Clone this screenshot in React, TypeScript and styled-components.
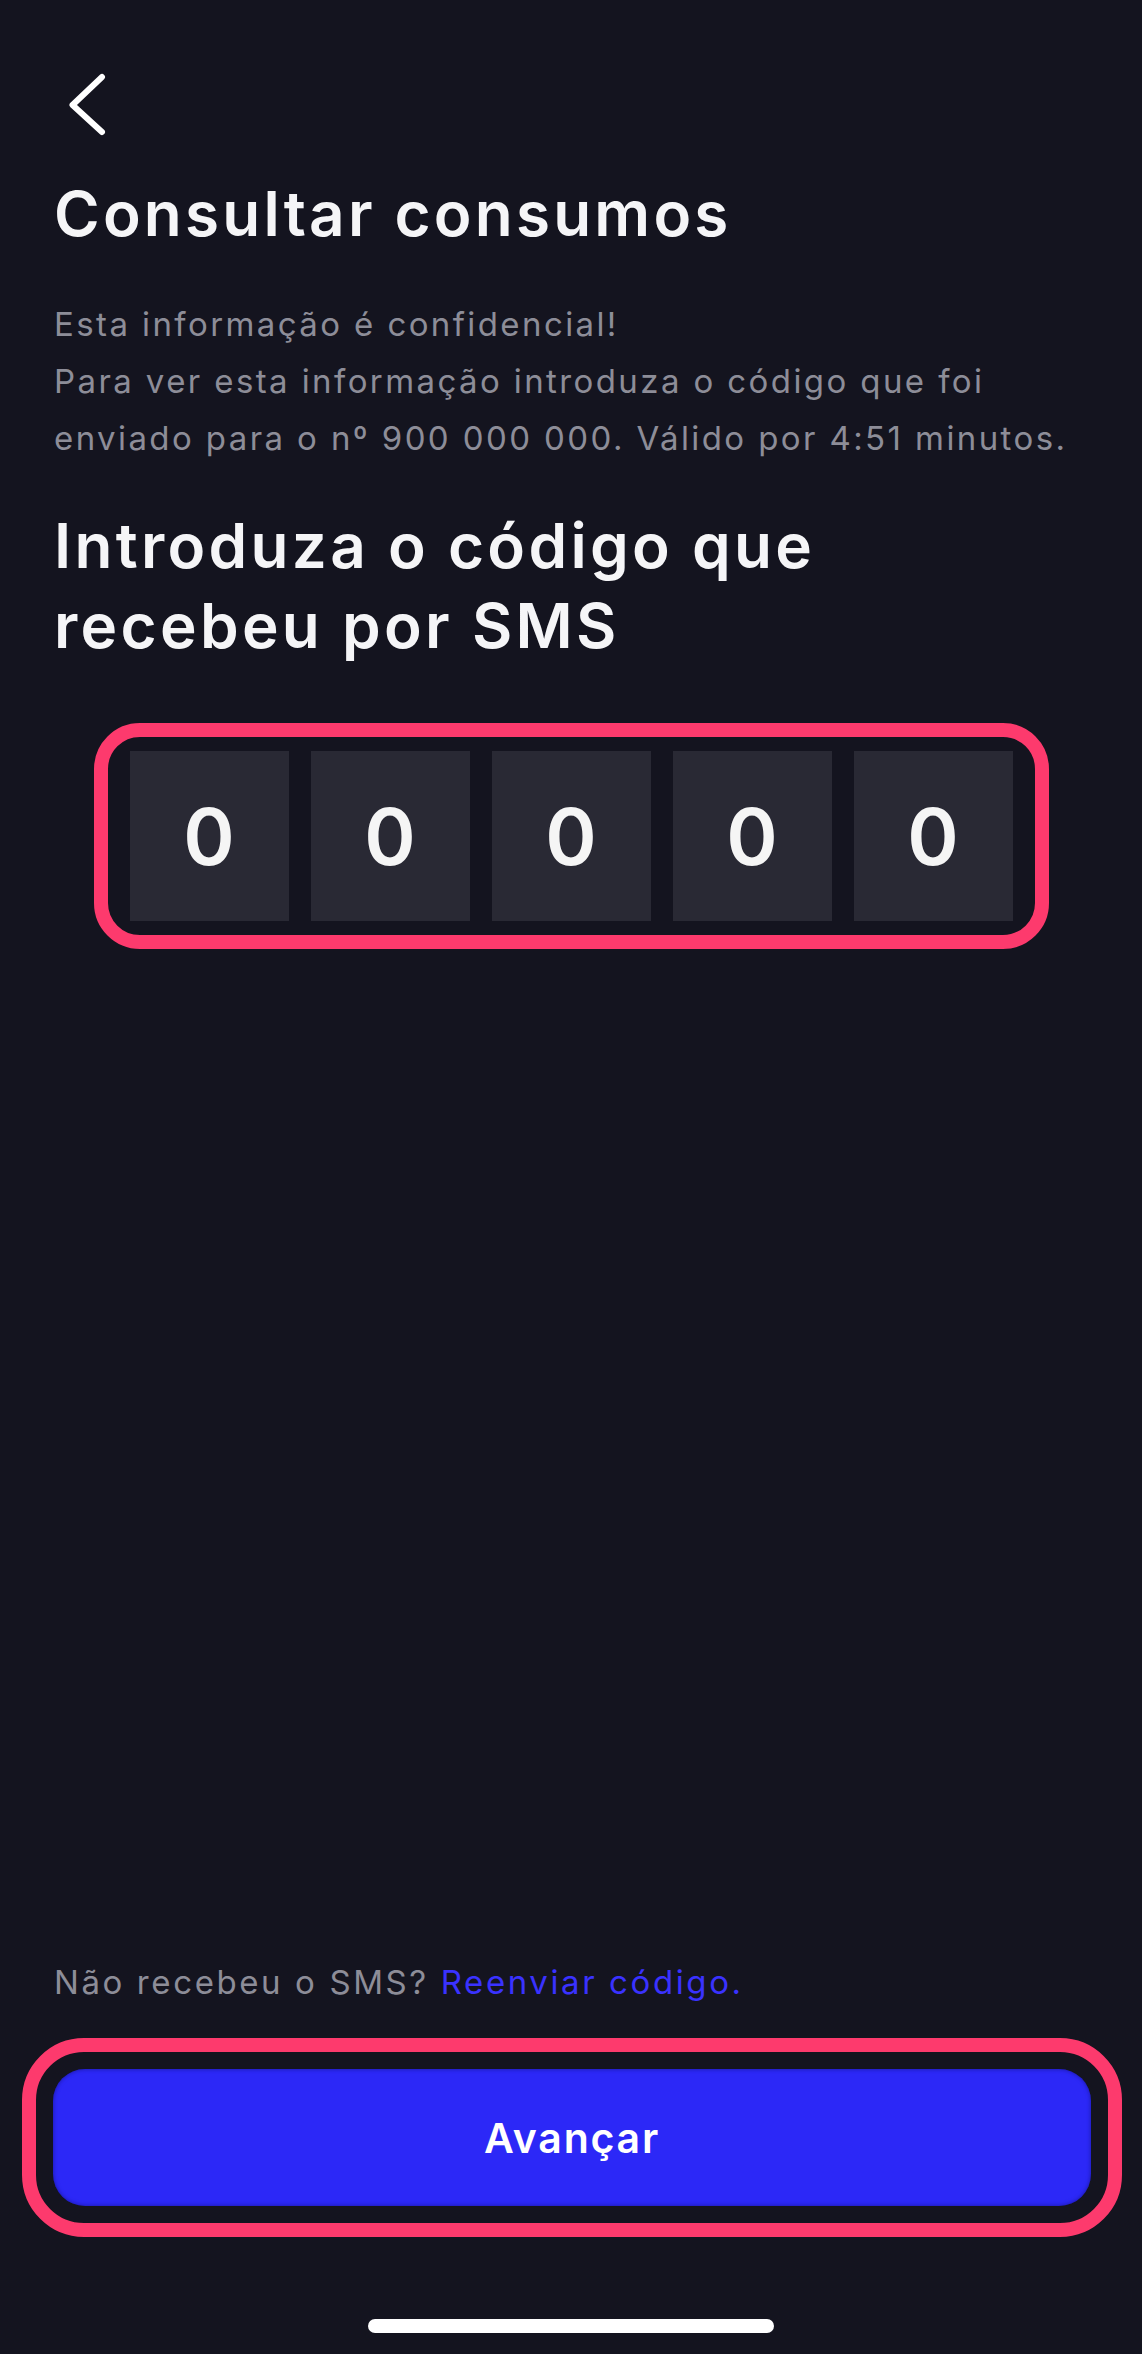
import styled, { createGlobalStyle } from "styled-components";

const GlobalStyle = createGlobalStyle`
  html, body {
    margin: 0;
    padding: 0;
    background: #14141f;
  }
  body {
    font-family: Inter, "Open Sans", sans-serif;
    -webkit-font-smoothing: antialiased;
  }
`;

const Screen = styled.div`
  width: 1142px;
  height: 2354px;
  display: flex;
  flex-direction: column;
  justify-content: space-between;
  background: #14141f;
  color: #f5f5f7;
  box-sizing: border-box;
`;

const TopBar = styled.div`
  height: 177px;
  box-sizing: border-box;
  padding: 72px 0 0 66px;
`;

const BackButton = styled.button`
  width: 40px;
  height: 64px;
  padding: 0;
  border: 0;
  background: none;
  cursor: pointer;
  display: block;
`;

const Content = styled.main`
  padding: 0 54px;
  display: flex;
  flex-direction: column;
`;

const Title = styled.h1`
  margin: 0;
  font-size: 62px;
  line-height: 74px;
  font-weight: 600;
  letter-spacing: 3.2px;
`;

const Lead = styled.p`
  margin: 45px 0 0;
  font-size: 33px;
  line-height: 57px;
  font-weight: 400;
  color: #8d8d98;
  letter-spacing: 2.4px;
`;

const Subtitle = styled.h2`
  margin: 39px 0 0;
  font-size: 62px;
  line-height: 80px;
  font-weight: 600;
  letter-spacing: 3.3px;
`;

const CodeFrame = styled.div`
  margin: 57px auto 0;
  display: flex;
  gap: 22px;
  padding: 14px 22px;
  border: 14px solid #fd3a6d;
  border-radius: 46px;
`;

const CodeCell = styled.div`
  width: 159px;
  height: 170px;
  background: #292934;
  display: flex;
  align-items: center;
  justify-content: center;
  font-size: 78px;
  font-weight: 600;
  color: #f5f5f5;
`;

const Footer = styled.footer`
  display: flex;
  flex-direction: column;
`;

const ResendText = styled.p`
  margin: 0;
  padding: 0 54px;
  font-size: 33px;
  line-height: 40px;
  color: #8d8d98;
  letter-spacing: 2.6px;
`;

const ResendLink = styled.a`
  color: #3a32ff;
  text-decoration: none;
  cursor: pointer;
`;

const ButtonFrame = styled.div`
  margin: 36px 20px 0 22px;
  padding: 17px;
  border: 14px solid #fd3a6d;
  border-radius: 62px;
`;

const PrimaryButton = styled.button`
  width: 100%;
  height: 137px;
  border: 0;
  border-radius: 32px;
  background: #2c28f7;
  box-shadow: inset 0 0 4px rgba(10, 8, 80, 0.55);
  color: #ffffff;
  font-family: Inter, "Open Sans", sans-serif;
  font-size: 41px;
  font-weight: 600;
  letter-spacing: 1.8px;
  cursor: pointer;
`;

const HomeIndicator = styled.div`
  width: 406px;
  height: 14px;
  margin: 82px auto 21px;
  border-radius: 7px;
  background: #ffffff;
`;

const code = ["0", "0", "0", "0", "0"];

export default function App() {
  return (
    <>
      <GlobalStyle />
      <Screen>
        <div>
          <TopBar>
            <BackButton aria-label="Voltar">
              <svg width="40" height="64" viewBox="0 0 40 64" fill="none">
                <path
                  d="M36 5 L6.5 33 L36 60"
                  stroke="#ffffff"
                  strokeWidth="6"
                  strokeLinecap="round"
                  strokeLinejoin="round"
                />
              </svg>
            </BackButton>
          </TopBar>
          <Content>
            <Title>Consultar consumos</Title>
            <Lead>
              Esta informação é confidencial!
              <br />
              Para ver esta informação introduza o código que foi enviado para o nº 900 000 000. Válido por 4:51 minutos.
            </Lead>
            <Subtitle>
              Introduza o código que
              <br />
              recebeu por SMS
            </Subtitle>
            <CodeFrame>
              {code.map((digit, i) => (
                <CodeCell key={i}>{digit}</CodeCell>
              ))}
            </CodeFrame>
          </Content>
        </div>
        <Footer>
          <ResendText>
            Não recebeu o SMS? <ResendLink>Reenviar código.</ResendLink>
          </ResendText>
          <ButtonFrame>
            <PrimaryButton>Avançar</PrimaryButton>
          </ButtonFrame>
          <HomeIndicator />
        </Footer>
      </Screen>
    </>
  );
}
